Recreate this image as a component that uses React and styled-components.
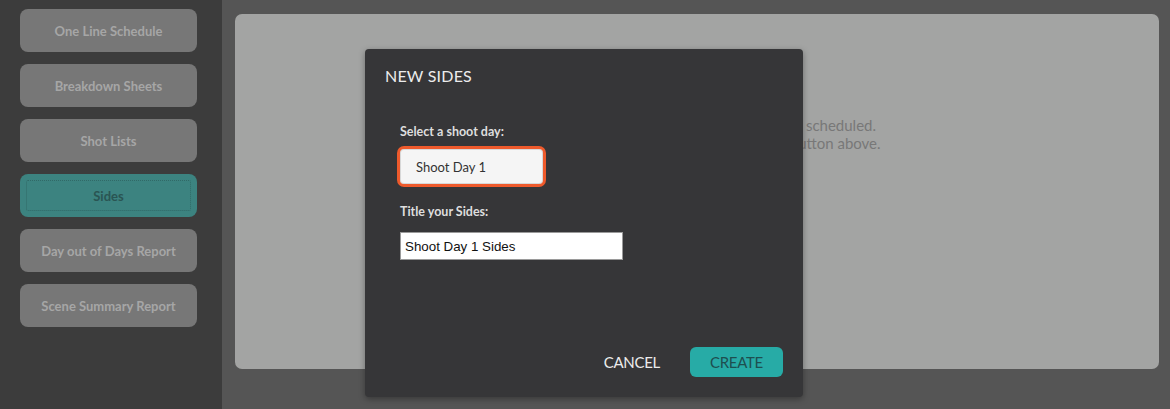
import React from 'react';
import styled, { createGlobalStyle } from 'styled-components';

const GlobalStyle = createGlobalStyle`
    html, body {
        margin: 0;
        padding: 0;
        background: #555555;
        font-family: Lato, "Open Sans", sans-serif;
    }
    * { box-sizing: border-box; }
`

const Page = styled.div`
    position: relative;
    width: 1170px;
    height: 409px;
    display: grid;
    grid-template-columns: 222px 1fr;
    overflow: hidden;
`

const Sidebar = styled.nav`
    background: #3c3c3c;
    padding: 9px 25px 0 20px;
    display: flex;
    flex-direction: column;
    gap: 12px;
`

const NavButton = styled.div`
    height: 43px;
    border-radius: 8px;
    background: ${p => p.$active ? '#3c8380' : '#777777'};
    color: ${p => p.$active ? '#2a5553' : '#a6a6a6'};
    font-size: 13px;
    font-weight: 700;
    display: flex;
    align-items: center;
    justify-content: center;
    outline: ${p => p.$active ? '1px dotted rgba(40, 85, 82, 0.55)' : 'none'};
    outline-offset: -7px;
`

const Main = styled.main`
    background: #555555;
    padding: 14px 11px 40px 13px;
    display: flex;
`

const Panel = styled.section`
    flex: 1;
    background: #a3a4a3;
    border-radius: 7px;
    padding-top: 102px;
    text-align: center;
    color: #787878;
    font-size: 15px;
    line-height: 18px;
`

const Modal = styled.div`
    position: absolute;
    left: 365px;
    top: 49px;
    width: 438px;
    height: 348px;
    background: #363638;
    border-radius: 4px;
    box-shadow: 0 2px 6px rgba(0, 0, 0, 0.35);
    padding: 17px 20px 20px 20px;
    display: flex;
    flex-direction: column;
`

const Title = styled.h2`
    margin: 0;
    font-size: 16px;
    font-weight: 400;
    color: #ececec;
    letter-spacing: 0.2px;
`

const Form = styled.div`
    padding: 39px 0 0 15px;
    display: flex;
    flex-direction: column;
    align-items: flex-start;
`

const Label = styled.label`
    font-size: 12.5px;
    line-height: 15px;
    font-weight: 700;
    color: #dedede;
    margin-bottom: ${p => p.$gap || 10}px;
`

const SelectBox = styled.div`
    margin-left: -3px;
    width: 149px;
    height: 41px;
    border: 3px solid #ee5a2c;
    border-radius: 7px;
    background: #f5f5f5;
    box-shadow: inset 0 0 0 1px #d8d8d8;
    color: #333;
    font-size: 13px;
    display: flex;
    align-items: center;
    padding-left: 16px;
    margin-bottom: 17px;
`

const TextInput = styled.div`
    width: 223px;
    height: 28px;
    background: #ffffff;
    border: 1px solid #9a9a9a;
    font-family: "Liberation Sans", Arial, sans-serif;
    font-size: 13.333px;
    color: #111;
    display: flex;
    align-items: center;
    padding-left: 4px;
`

const Actions = styled.div`
    margin-top: auto;
    display: flex;
    justify-content: flex-end;
    align-items: center;
    gap: 30px;
`

const TextButton = styled.div`
    font-size: 15px;
    color: #ececec;
    letter-spacing: -0.3px;
`

const CreateButton = styled.div`
    width: 93px;
    height: 30px;
    border-radius: 6px;
    background: #27aba6;
    color: #1e4f50;
    font-size: 15px;
    letter-spacing: -0.3px;
    display: flex;
    align-items: center;
    justify-content: center;
`

const navItems = [
    'One Line Schedule',
    'Breakdown Sheets',
    'Shot Lists',
    'Sides',
    'Day out of Days Report',
    'Scene Summary Report',
];

export default function App() {
    return (
        <>
            <GlobalStyle />
            <Page>
                <Sidebar>
                    {navItems.map(item => (
                        <NavButton key={item} $active={item === 'Sides'}>{item}</NavButton>
                    ))}
                </Sidebar>
                <Main>
                    <Panel>
                        There are currently no Sides for this project scheduled.<br />
                        To get started, create new Sides using the button above.
                    </Panel>
                </Main>
                <Modal>
                    <Title>NEW SIDES</Title>
                    <Form>
                        <Label $gap={7}>Select a shoot day:</Label>
                        <SelectBox>Shoot Day 1</SelectBox>
                        <Label $gap={13}>Title your Sides:</Label>
                        <TextInput>Shoot Day 1 Sides</TextInput>
                    </Form>
                    <Actions>
                        <TextButton>CANCEL</TextButton>
                        <CreateButton>CREATE</CreateButton>
                    </Actions>
                </Modal>
            </Page>
        </>
    );
}
